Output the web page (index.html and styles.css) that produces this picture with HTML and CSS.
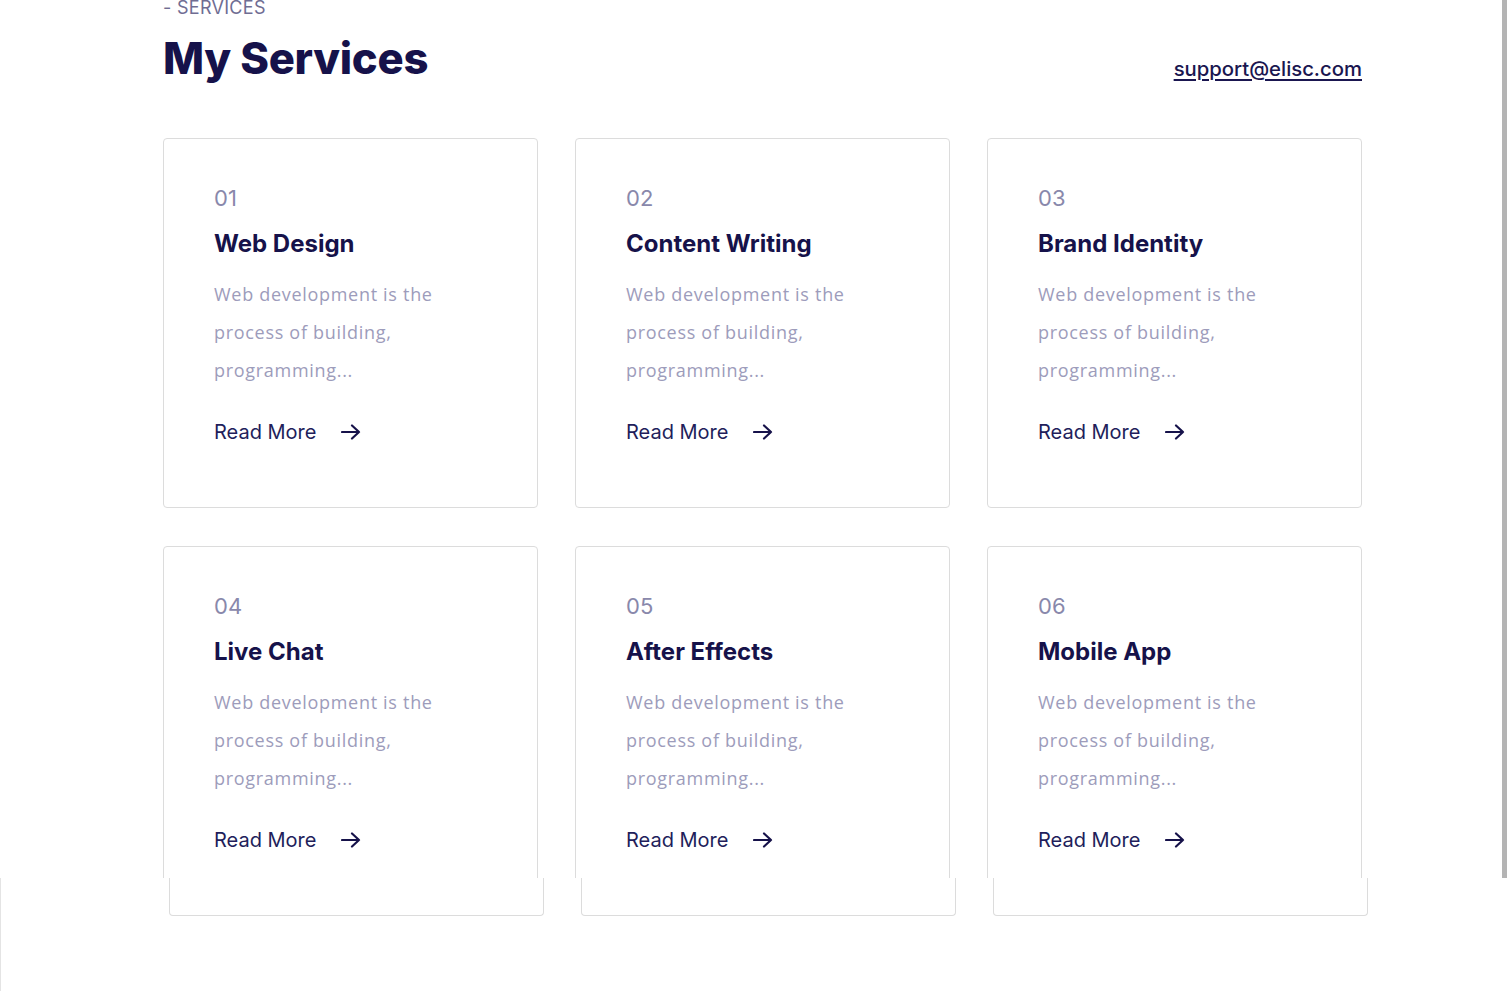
FILE: index.html
```html
<!DOCTYPE html>
<html>
<head>
<meta charset="utf-8">
<link rel="stylesheet" href="styles.css">
</head>
<body>
<div class="screen">
  <section class="services">
    <div class="label">- SERVICES</div>
    <div class="head">
      <h1 class="title">My Services</h1>
      <a class="email" href="#">support@elisc.com</a>
    </div>
    <div class="grid">
      <div class="card"><div class="num">01</div><h3 class="name">Web Design</h3><p class="desc">Web development is the process of building, programming...</p><a class="more" href="#">Read More <svg class="arrow" viewBox="0 0 20 16" width="20" height="16"><path d="M1 8h17M11 1.5L18 8l-7 6.5" fill="none" stroke="currentColor" stroke-width="2.2" stroke-linecap="round" stroke-linejoin="round"/></svg></a></div>
      <div class="card"><div class="num">02</div><h3 class="name">Content Writing</h3><p class="desc">Web development is the process of building, programming...</p><a class="more" href="#">Read More <svg class="arrow" viewBox="0 0 20 16" width="20" height="16"><path d="M1 8h17M11 1.5L18 8l-7 6.5" fill="none" stroke="currentColor" stroke-width="2.2" stroke-linecap="round" stroke-linejoin="round"/></svg></a></div>
      <div class="card"><div class="num">03</div><h3 class="name">Brand Identity</h3><p class="desc">Web development is the process of building, programming...</p><a class="more" href="#">Read More <svg class="arrow" viewBox="0 0 20 16" width="20" height="16"><path d="M1 8h17M11 1.5L18 8l-7 6.5" fill="none" stroke="currentColor" stroke-width="2.2" stroke-linecap="round" stroke-linejoin="round"/></svg></a></div>
      <div class="card"><div class="num">04</div><h3 class="name">Live Chat</h3><p class="desc">Web development is the process of building, programming...</p><a class="more" href="#">Read More <svg class="arrow" viewBox="0 0 20 16" width="20" height="16"><path d="M1 8h17M11 1.5L18 8l-7 6.5" fill="none" stroke="currentColor" stroke-width="2.2" stroke-linecap="round" stroke-linejoin="round"/></svg></a></div>
      <div class="card"><div class="num">05</div><h3 class="name">After Effects</h3><p class="desc">Web development is the process of building, programming...</p><a class="more" href="#">Read More <svg class="arrow" viewBox="0 0 20 16" width="20" height="16"><path d="M1 8h17M11 1.5L18 8l-7 6.5" fill="none" stroke="currentColor" stroke-width="2.2" stroke-linecap="round" stroke-linejoin="round"/></svg></a></div>
      <div class="card"><div class="num">06</div><h3 class="name">Mobile App</h3><p class="desc">Web development is the process of building, programming...</p><a class="more" href="#">Read More <svg class="arrow" viewBox="0 0 20 16" width="20" height="16"><path d="M1 8h17M11 1.5L18 8l-7 6.5" fill="none" stroke="currentColor" stroke-width="2.2" stroke-linecap="round" stroke-linejoin="round"/></svg></a></div>
    </div>
  </section>
</div>
<div class="lower">
  <div class="stub"></div>
  <div class="stub"></div>
  <div class="stub"></div>
</div>
</body>
</html>
```
FILE: styles.css
```css
* { box-sizing: border-box; }
html, body { margin: 0; padding: 0; background: #fff; }
body { font-family: Inter, "Liberation Sans", sans-serif; color: #16124a; overflow: hidden; }

.screen {
  height: 878px;
  overflow: hidden;
  border-right: 5px solid #b4b4b4;
  width: 1507px;
}
.services {
  width: 1199px;
  margin-left: 163px;
}
.label {
  font-size: 18px;
  line-height: 16px;
  letter-spacing: 0.3px;
  color: #6f6d93;
}
.head {
  display: flex;
  justify-content: space-between;
  align-items: flex-end;
  margin-top: 16px;
}
.title {
  margin: 0;
  font-size: 43.6px;
  line-height: 54px;
  font-weight: 800;
  color: #16124a;
  letter-spacing: -0.3px;
}
.email {
  font-size: 20.3px;
  font-weight: 500;
  color: #1a1650;
  text-decoration: underline;
  text-decoration-thickness: 2px;
  text-underline-offset: 3px;
  margin-bottom: 5px;
}
.grid {
  display: grid;
  grid-template-columns: repeat(3, 375px);
  column-gap: 37px;
  row-gap: 38px;
  margin-top: 52px;
}
.card {
  height: 370px;
  border: 1px solid #dcdcdc;
  border-radius: 4px;
  padding: 46px 30px 0 50px;
}
.num {
  font-size: 22px;
  line-height: 26px;
  color: #8988ab;
  font-weight: 400;
}
.name {
  margin: 18px 0 0;
  font-size: 24px;
  line-height: 30px;
  font-weight: 700;
  color: #16124a;
}
.desc {
  margin: 16px 0 0;
  font-family: "Open Sans", sans-serif;
  font-size: 18px;
  line-height: 38px;
  letter-spacing: 0.7px;
  color: #9d9cbb;
  width: 260px;
}
.more {
  display: inline-flex;
  align-items: center;
  gap: 25px;
  margin-top: 31px;
  font-size: 20px;
  color: #221e5b;
  text-decoration: none;
}
.arrow { color: #16124a; }

.lower {
  height: 113px;
  border-left: 1px solid #e4e4e4;
  display: flex;
  gap: 37px;
  padding-left: 168px;
  align-items: flex-start;
}
.stub {
  width: 375px;
  height: 38px;
  border: 1px solid #dcdcdc;
  border-top: none;
  border-radius: 0 0 4px 4px;
}
```
